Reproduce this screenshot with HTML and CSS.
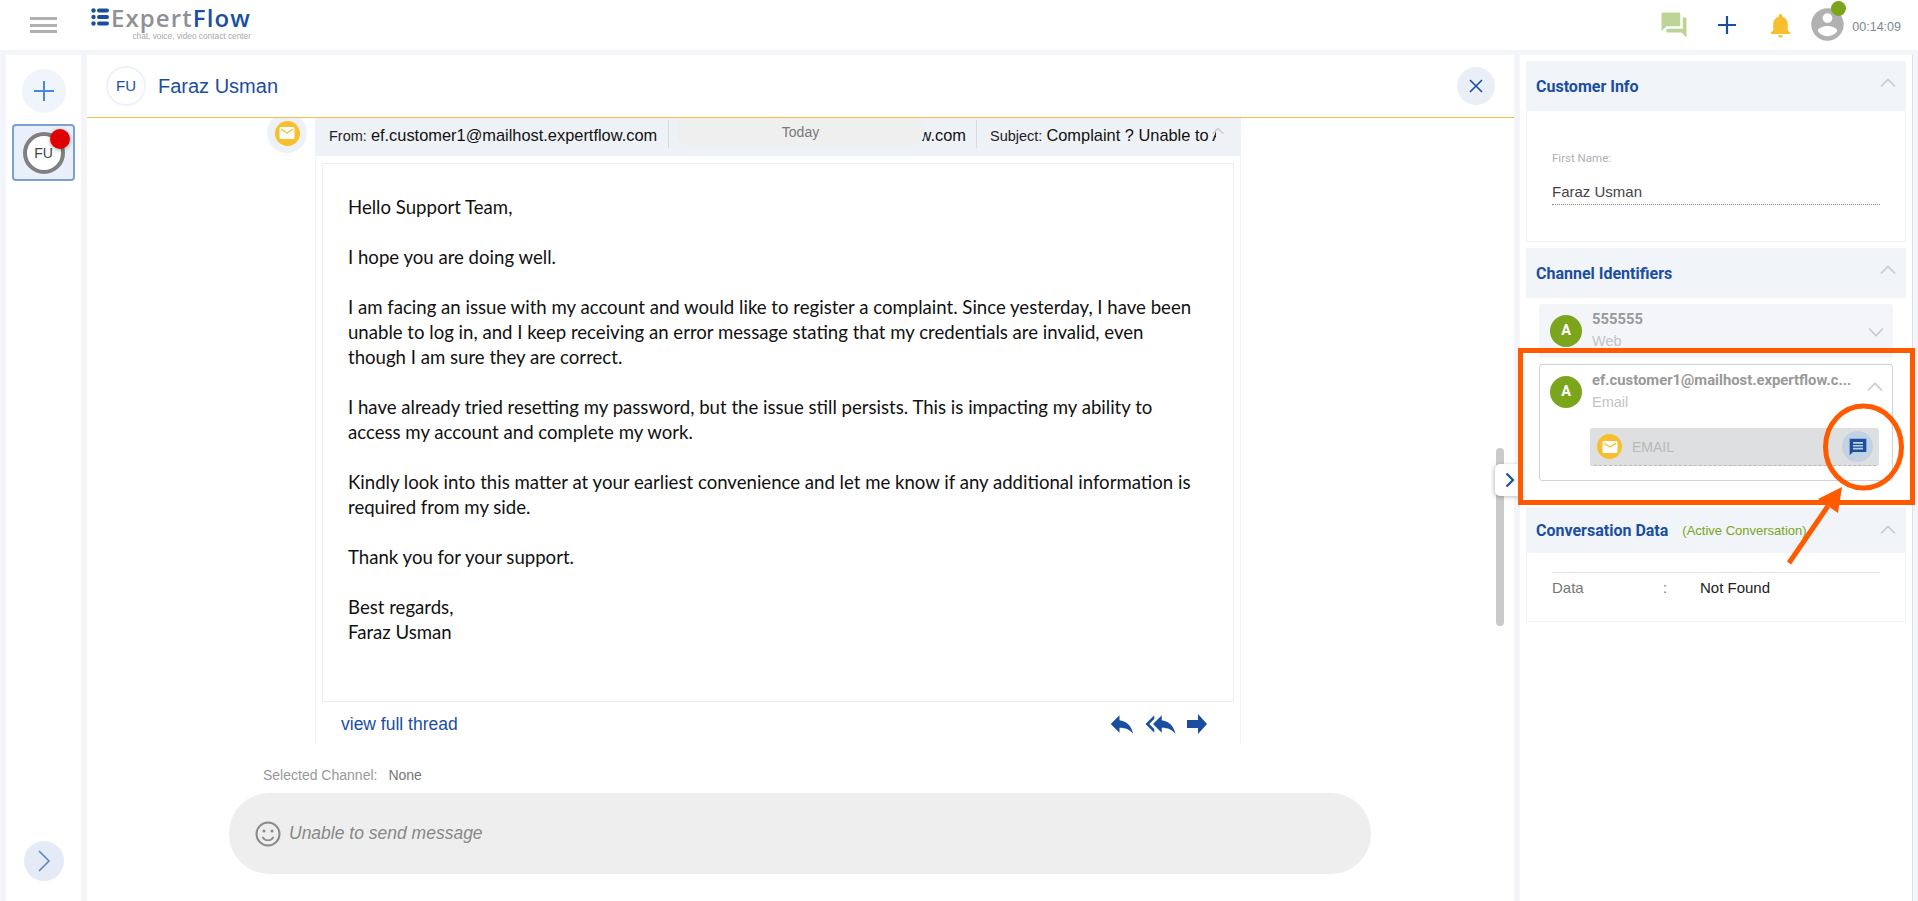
FILE: index.html
```html
<html>
<head>
    <title>ExpertFlow</title>
    <link rel="stylesheet" href="styles.css">
</head>

<body>
<svg class="defs" width="0" height="0">
    <symbol id="mail" viewBox="0 0 24 24"><path d="M20 4H4c-1.1 0-2 .9-2 2v12c0 1.1.9 2 2 2h16c1.1 0 2-.9 2-2V6c0-1.1-.9-2-2-2zm0 4l-8 5-8-5V6l8 5 8-5v2z"/></symbol>
    <symbol id="up" viewBox="0 0 16 10"><path d="M1 8.5L8 1.5l7 7" fill="none" stroke="currentColor" stroke-width="1.6"/></symbol>
</svg>

<div class="topbar">
    <div class="hamburger"><span></span><span></span><span></span></div>
    <div class="logo">
        <svg class="logoDots" width="18" height="18" viewBox="0 0 18 18" fill="#1a4fa0">
            <circle cx="2.5" cy="2.5" r="2.2"/><rect x="6" y="0.5" width="12" height="4" rx="2"/>
            <circle cx="2.5" cy="9" r="2.2"/><rect x="6" y="7" width="12" height="4" rx="2"/>
            <circle cx="2.5" cy="15.5" r="2.2"/><rect x="6" y="13.5" width="12" height="4" rx="2"/>
        </svg>
        <div class="logoText">
            <div class="logoName"><span class="grey">Expert</span><span class="blue">Flow</span></div>
            <div class="logoSub">chat, voice, video contact center</div>
        </div>
    </div>
    <div class="topIcons">
        <svg class="icoChat" width="30" height="30" viewBox="0 0 24 24" fill="#bcd495"><path d="M21 6h-2v9H6v2c0 .55.45 1 1 1h11l4 4V7c0-.55-.45-1-1-1zm-4 6V3c0-.55-.45-1-1-1H3c-.55 0-1 .45-1 1v14l4-4h10c.55 0 1-.45 1-1z"/></svg>
        <svg class="icoPlus" width="18" height="18" viewBox="0 0 18 18"><path d="M9 0v18M0 9h18" stroke="#1a4fa0" stroke-width="2.2"/></svg>
        <svg class="icoBell" width="29" height="29" viewBox="0 0 24 24" fill="#f8bf2c"><path d="M12 22c1.1 0 2-.9 2-2h-4c0 1.1.9 2 2 2zm6-6v-5c0-3.07-1.63-5.64-4.5-6.32V4c0-.83-.67-1.5-1.5-1.5s-1.5.67-1.5 1.5v.68C7.64 5.36 6 7.92 6 11v5l-2 2v1h16v-1l-2-2z"/></svg>
        <div class="userBox">
            <svg width="39" height="39" viewBox="0 0 24 24" fill="#b1b1b1"><path d="M12 2C6.48 2 2 6.48 2 12s4.48 10 10 10 10-4.48 10-10S17.52 2 12 2zm0 3c1.66 0 3 1.34 3 3s-1.34 3-3 3-3-1.34-3-3 1.34-3 3-3zm0 14.2c-2.5 0-4.71-1.28-6-3.22.03-1.99 4-3.08 6-3.08 1.99 0 5.97 1.09 6 3.08-1.29 1.94-3.5 3.22-6 3.22z"/></svg>
            <span class="userDot"></span>
        </div>
        <span class="timer">00:14:09</span>
    </div>
</div>

<div class="page">
    <div class="leftBar">
        <div class="addBtn"><svg width="20" height="20" viewBox="0 0 20 20"><path d="M10 0v20M0 10h20" stroke="#4a86e8" stroke-width="2"/></svg></div>
        <div class="convItem">
            <div class="convAvatar">FU</div>
            <span class="redDot"></span>
        </div>
        <div class="expandBtn"><svg width="14" height="22" viewBox="0 0 14 22"><path d="M2 1l10 10L2 21" fill="none" stroke="#5f86c4" stroke-width="1.6"/></svg></div>
    </div>

    <div class="mainCol">
        <div class="chatHead">
            <div class="headAvatar">FU</div>
            <div class="headName">Faraz Usman</div>
            <div class="closeBtn"><svg width="14" height="14" viewBox="0 0 14 14"><path d="M1 1l12 12M13 1L1 13" stroke="#1a4fa0" stroke-width="1.6"/></svg></div>
        </div>

        <div class="thread">
            <div class="mailHalo"><div class="mailDot"><svg width="18" height="18" fill="#fff"><use href="#mail"/></svg></div></div>
            <div class="mailCard">
                <div class="mailHead">
                    <div class="mailCell cellFrom">From: <b>ef.customer1@mailhost.expertflow.com</b></div>
                    <div class="mailCell cellTo"><b>support@mailhost.expertflow.com</b></div>
                    <div class="mailCell cellSubject">Subject: <b>Complaint ? Unable to Access Account</b></div>
                    <svg class="mailUp" width="12" height="8" color="#c4c4c4"><use href="#up"/></svg>
                    <div class="todayPill">Today</div>
                </div>
                <div class="mailBody">
                    <p>Hello Support Team,</p>
                    <p>I hope you are doing well.</p>
                    <p>I am facing an issue with my account and would like to register a complaint. Since yesterday, I have been unable to log in, and I keep receiving an error message stating that my credentials are invalid, even though I am sure they are correct.</p>
                    <p>I have already tried resetting my password, but the issue still persists. This is impacting my ability to access my account and complete my work.</p>
                    <p>Kindly look into this matter at your earliest convenience and let me know if any additional information is required from my side.</p>
                    <p>Thank you for your support.</p>
                    <p>Best regards,<br>Faraz Usman</p>
                </div>
                <div class="mailFoot">
                    <span class="fullThread">view full thread</span>
                    <div class="mailActions">
                        <svg width="30" height="30" viewBox="0 0 24 24" fill="#1a4fa0"><path d="M10 9V5l-7 7 7 7v-4.1c5 0 8.500 1.600 11 5.100-1-5-4-10-11-11z"/></svg>
                        <svg width="33" height="30" viewBox="0 0 24 24" fill="#1a4fa0"><path d="M7 8V5l-7 7 7 7v-3l-4-4 4-4zm6 1V5l-7 7 7 7v-4.100c5 0 8.500 1.600 11 5.100-1-5-4-10-11-11z"/></svg>
                        <svg class="icoForward" width="20" height="20" viewBox="0 0 20 20" fill="#1a4fa0"><path d="M0 6h11V0l9 10-9 10v-6H0z"/></svg>
                    </div>
                </div>
            </div>
            <div class="scrollThumb"></div>
        </div>
        <div class="collapseTab"><svg width="10" height="16" viewBox="0 0 10 16"><path d="M1.500 1.500L8 8l-6.500 6.500" fill="none" stroke="#1a4fa0" stroke-width="2.200"/></svg></div>

        <div class="composer">
            <div class="selected"><span class="selLabel">Selected Channel:</span><span class="selValue">None</span></div>
            <div class="inputPill">
                <svg width="26" height="26" viewBox="0 0 26 26" fill="none" stroke="#8a8a8a" stroke-width="2"><circle cx="13" cy="13" r="11.500"/><circle cx="9" cy="10" r="1.500" fill="#8a8a8a" stroke="none"/><circle cx="17" cy="10" r="1.500" fill="#8a8a8a" stroke="none"/><path d="M7.500 16c1.200 2.200 3.200 3.300 5.500 3.300s4.300-1.100 5.500-3.300" stroke-width="1.600"/></svg>
                <span class="inputText">Unable to send message</span>
            </div>
        </div>
    </div>

    <div class="rightBar">
        <div class="section">
            <div class="sectionHead"><span class="sectionTitle">Customer Info</span><svg class="sectionUp" width="16" height="10" color="#c9c9c9"><use href="#up"/></svg></div>
            <div class="sectionBody infoBody">
                <div class="fieldLabel">First Name:</div>
                <div class="fieldValue">Faraz Usman</div>
            </div>
        </div>

        <div class="section">
            <div class="sectionHead"><span class="sectionTitle">Channel Identifiers</span><svg class="sectionUp" width="16" height="10" color="#c9c9c9"><use href="#up"/></svg></div>
            <div class="channels">
                <div class="channel channelClosed">
                    <div class="channelTop">
                        <div class="channelAvatar">A</div>
                        <div class="channelText">
                            <div class="channelId">555555</div>
                            <div class="channelType">Web</div>
                        </div>
                        <svg class="channelArrow flip" width="16" height="10" color="#c9c9c9"><use href="#up"/></svg>
                    </div>
                </div>
                <div class="channel channelOpen">
                    <div class="channelTop">
                        <div class="channelAvatar">A</div>
                        <div class="channelText">
                            <div class="channelId">ef.customer1@mailhost.expertflow.c...</div>
                            <div class="channelType">Email</div>
                        </div>
                        <svg class="channelArrow" width="16" height="10" color="#c9c9c9"><use href="#up"/></svg>
                    </div>
                    <div class="channelBtn">
                        <div class="mailDot"><svg width="18" height="18" fill="#fff"><use href="#mail"/></svg></div>
                        <span class="channelBtnText">EMAIL</span>
                        <div class="startChat"><svg width="20" height="20" viewBox="0 0 24 24" fill="#1a4fa0"><path fill-rule="evenodd" d="M2 2h20v16H6l-4 4zM6 6v2h12V6zM6 9.500v2h12v-2zM6 13v2h12v-2z"/></svg></div>
                    </div>
                </div>
            </div>
        </div>

        <div class="section">
            <div class="sectionHead convHead"><span class="sectionTitle">Conversation Data</span><span class="activeConv">(Active Conversation)</span><svg class="sectionUp" width="16" height="10" color="#c9c9c9"><use href="#up"/></svg></div>
            <div class="sectionBody dataBody">
                <div class="dataRow"><span class="dataKey">Data</span><span class="dataColon">:</span><span class="dataVal">Not Found</span></div>
            </div>
        </div>
    </div>
</div>

<svg class="annotation" width="408" height="240" viewBox="1510 340 408 240">
    <rect x="1520.500" y="350.500" width="392" height="152" fill="none" stroke="#ff5a00" stroke-width="5"/>
    <ellipse cx="1863.500" cy="447" rx="38" ry="41" fill="none" stroke="#ff5a00" stroke-width="5"/>
    <path d="M1789 563L1828 506" stroke="#ff5a00" stroke-width="5"/>
    <path d="M1842 487L1818 499L1838 513z" fill="#ff5a00"/>
</svg>
</body>
</html>
```

FILE: styles.css
```css
html, body {
    margin: 0;
    height: 100%;
    overflow: hidden;
}

body {
    position: relative;
    background-color: #f3f5fa;
    font-family: "Liberation Sans", Arial, sans-serif;
}

.defs {
    position: absolute;
}

p {
    margin: 0 0 25px 0;
}

/* top bar */
.topbar {
    height: 50px;
    background-color: #fff;
    display: flex;
    align-items: flex-start;
}

.hamburger {
    margin: 17px 0 0 30px;
    width: 27px;
    height: 16px;
    display: flex;
    flex-direction: column;
    justify-content: space-between;
}

.hamburger span {
    height: 3px;
    background-color: #b0b0b0;
}

.logo {
    margin: 7px 0 0 34px;
    display: flex;
}

.logoDots {
    margin: 1px 2px 0 0;
}

.logoName {
    font-family: "Open Sans", sans-serif;
    font-size: 24px;
    line-height: 22px;
    letter-spacing: 1.100px;
    font-weight: 600;
    height: 24px;
}

.grey {
    color: #8e9195;
}

.blue {
    color: #1a4fa0;
}

.logoSub {
    font-size: 8.300px;
    line-height: 10px;
    color: #a9a9a9;
    text-align: right;
}

.topIcons {
    margin-left: auto;
    display: flex;
    align-items: center;
    height: 50px;
    padding-right: 17px;
}

.icoChat {
    margin: 0 29px 0 0;
}

.icoPlus {
    margin-right: 30px;
}

.icoBell {
    margin-right: 13px;
}

.userBox {
    position: relative;
    width: 39px;
    height: 39px;
    margin-bottom: 2px;
}

.userDot {
    position: absolute;
    left: 23px;
    top: -4px;
    width: 15px;
    height: 15px;
    border-radius: 50%;
    background-color: #7aa51c;
}

.timer {
    font-size: 12.500px;
    color: #7d8794;
    margin: 4px 0 0 5px;
}

/* three columns */
.page {
    height: 851px;
    padding: 5px 5px 0 6px;
    box-sizing: border-box;
    display: flex;
    gap: 6px;
}

.leftBar {
    width: 75px;
    background-color: #fff;
    display: flex;
    flex-direction: column;
    align-items: center;
}

.addBtn {
    width: 44px;
    height: 44px;
    margin-top: 14px;
    border-radius: 50%;
    background-color: #f0f4fb;
    display: flex;
    align-items: center;
    justify-content: center;
}

.convItem {
    position: relative;
    width: 63px;
    height: 57px;
    margin-top: 11px;
    box-sizing: border-box;
    background-color: #e9f0fb;
    border: 2px solid #7f9fd0;
    border-radius: 4px;
    display: flex;
    align-items: center;
    justify-content: center;
}

.convAvatar {
    width: 34px;
    height: 34px;
    border: 4px solid #808080;
    border-radius: 50%;
    background-color: #fff;
    color: #444;
    font-size: 14px;
    text-align: center;
    line-height: 34px;
}

.redDot {
    position: absolute;
    right: 3px;
    top: 3px;
    width: 20px;
    height: 20px;
    border-radius: 50%;
    background-color: #e00000;
    box-shadow: 0 1px 4px rgba(0, 0, 0, 0.35);
}

.expandBtn {
    margin-top: auto;
    margin-bottom: 20px;
    width: 40px;
    height: 40px;
    border-radius: 50%;
    background-color: #e4ebf7;
    display: flex;
    align-items: center;
    justify-content: center;
}

/* middle column */
.mainCol {
    position: relative;
    width: 1427px;
    background-color: #fff;
    display: flex;
    flex-direction: column;
}

.chatHead {
    height: 62px;
    flex-shrink: 0;
    border-bottom: 1px solid #f0bf4c;
    display: flex;
    align-items: center;
    padding: 0 19px;
}

.headAvatar {
    width: 36px;
    height: 36px;
    border: 2px solid #edf2fd;
    border-radius: 50%;
    color: #1a4fa0;
    font-size: 15px;
    line-height: 35px;
    text-align: center;
}

.headName {
    margin-left: 12px;
    font-size: 20px;
    color: #1a4fa0;
}

.closeBtn {
    margin-left: auto;
    width: 38px;
    height: 38px;
    border-radius: 50%;
    background-color: #e9eef7;
    display: flex;
    align-items: center;
    justify-content: center;
}

.thread {
    position: relative;
    height: 626px;
    flex-shrink: 0;
    overflow: hidden;
    display: flex;
    align-items: flex-start;
    padding-left: 180px;
    gap: 8px;
}

.mailHalo {
    width: 40px;
    height: 40px;
    margin-top: -5px;
    flex-shrink: 0;
    border-radius: 50%;
    background-color: #eef1f6;
    display: flex;
    align-items: center;
    justify-content: center;
}

.mailDot {
    width: 25px;
    height: 25px;
    flex-shrink: 0;
    border-radius: 50%;
    background-color: #f8bf2c;
    display: flex;
    align-items: center;
    justify-content: center;
}

.mailCard {
    width: 926px;
    height: 626px;
    box-sizing: border-box;
    border-left: 1px solid #edf2fb;
    border-right: 1px solid #edf2fb;
    display: flex;
    flex-direction: column;
}

.mailHead {
    position: relative;
    height: 38px;
    flex-shrink: 0;
    background-color: #eef1f6;
    display: flex;
    align-items: flex-start;
    padding-top: 2px;
    box-sizing: border-box;
    font-size: 14.500px;
    color: #222;
}

.mailHead b {
    font-weight: normal;
    font-size: 16.400px;
    color: #111;
}

.mailCell {
    height: 28px;
    line-height: 30px;
    white-space: nowrap;
    overflow: hidden;
    box-sizing: border-box;
    border-right: 1px solid #d8dbe0;
}

.cellFrom {
    width: 353px;
    padding-left: 13px;
}

.cellTo {
    width: 308px;
    direction: rtl;
    padding-right: 10px;
}

.cellSubject {
    width: 239px;
    padding-left: 13px;
    border-right: none;
}

.mailUp {
    position: absolute;
    right: 16px;
    top: 9px;
}

.todayPill {
    position: absolute;
    left: 361px;
    top: 0;
    width: 247px;
    height: 27px;
    background-color: #efefef;
    border-radius: 0 0 10px 10px;
    color: #777;
    font-size: 14px;
    line-height: 28px;
    text-align: center;
}

.mailBody {
    margin: 7px 6px 0 6px;
    height: 539px;
    flex-shrink: 0;
    box-sizing: border-box;
    border: 1px solid #eeeeee;
    padding: 31px 37px 0 25px;
    font-family: Lato, sans-serif;
    font-size: 18.600px;
    line-height: 25px;
    color: #111;
}

.mailFoot {
    flex: 1;
    display: flex;
    align-items: center;
    justify-content: space-between;
    padding: 2px 33px 0 25px;
}

.fullThread {
    color: #1a4fa0;
    font-size: 17.500px;
}

.mailActions {
    display: flex;
    align-items: center;
    gap: 7px;
}

.icoForward {
    margin-left: 3px;
}

.scrollThumb {
    position: absolute;
    left: 1409px;
    top: 330px;
    width: 8px;
    height: 178px;
    border-radius: 4px;
    background-color: #cacaca;
}

.collapseTab {
    position: absolute;
    left: 1408px;
    top: 409px;
    width: 25px;
    height: 32px;
    box-sizing: border-box;
    padding-left: 10px;
    background-color: #fff;
    border-radius: 5px 0 0 5px;
    box-shadow: -1px 1px 4px rgba(0, 0, 0, 0.25);
    display: flex;
    align-items: center;
}

.composer {
    padding: 23px 0 0 142px;
}

.selected {
    font-size: 14px;
    line-height: 16px;
    margin-left: 34px;
    height: 26px;
}

.selLabel {
    color: #999;
}

.selValue {
    color: #777;
    margin-left: 11px;
}

.inputPill {
    width: 1142px;
    height: 81px;
    box-sizing: border-box;
    padding-left: 26px;
    background-color: #eeeeee;
    border-radius: 40px;
    display: flex;
    align-items: center;
    gap: 8px;
}

.inputText {
    font-size: 17.500px;
    font-style: italic;
    color: #888;
}

/* right column */
.rightBar {
    flex: 1;
    background-color: #fff;
    padding: 6px 6px 0 6px;
    border-right: 1px solid #dde0e6;
    box-sizing: border-box;
}

.section {
    margin-bottom: 6px;
}

.sectionHead {
    position: relative;
    height: 50px;
    background-color: #f1f4f8;
    display: flex;
    align-items: center;
    padding-left: 10px;
}

.convHead {
    height: 45px;
}

.sectionTitle {
    font-family: Roboto, sans-serif;
    font-weight: 700;
    font-size: 16px;
    color: #1a4fa0;
}

.sectionUp {
    position: absolute;
    right: 10px;
    top: 17px;
}

.sectionBody {
    box-sizing: border-box;
    border: 1px solid #f1f3f6;
    border-top: none;
}

.infoBody {
    height: 131px;
    padding: 41px 25px 0 25px;
}

.fieldLabel {
    font-family: Roboto, sans-serif;
    font-size: 11.500px;
    line-height: 12px;
    color: #aeb1b5;
}

.fieldValue {
    margin-top: 16px;
    font-size: 15px;
    line-height: 24px;
    height: 24px;
    color: #444;
    border-bottom: 1px dotted #888;
}

.channels {
    padding: 6px 13px 21px 13px;
    margin-bottom: 6px;
}

.channel {
    box-sizing: border-box;
    width: 354px;
    border-radius: 3px;
}

.channelClosed {
    height: 54px;
    background-color: #f3f5f9;
    margin-bottom: 6px;
    overflow: hidden;
}

.channelOpen {
    height: 117px;
    border: 1px solid #cfd2d6;
}

.channelTop {
    position: relative;
    display: flex;
    padding: 10px 0 0 11px;
    gap: 10px;
}

.channelOpen .channelTop {
    padding-left: 10px;
}

.channelAvatar {
    width: 32px;
    height: 32px;
    margin-top: 1px;
    border-radius: 50%;
    background-color: #7aa51c;
    color: #fff;
    font-family: Roboto, sans-serif;
    font-weight: 700;
    font-size: 14.500px;
    line-height: 32px;
    text-align: center;
}

.channelText {
    margin-top: -6px;
}

.channelId {
    font-family: Roboto, sans-serif;
    font-weight: 700;
    font-size: 14.800px;
    line-height: 22px;
    color: #999;
    white-space: nowrap;
}

.channelType {
    font-size: 14.500px;
    line-height: 22px;
    color: #c4c4c4;
}

.channelArrow {
    position: absolute;
    right: 9px;
    top: 23px;
}

.channelOpen .channelArrow {
    top: 17px;
}

.flip {
    transform: scaleY(-1);
}

.channelBtn {
    margin: 15px 0 0 50px;
    width: 289px;
    height: 38px;
    box-sizing: border-box;
    padding: 0 6px 0 7px;
    background-color: #dedfe1;
    border-radius: 3px;
    border-bottom: 1px dashed #bbb;
    display: flex;
    align-items: center;
}

.channelBtnText {
    margin-left: 10px;
    font-size: 14px;
    color: #b8b8b8;
}

.startChat {
    margin-left: auto;
    width: 31px;
    height: 31px;
    border-radius: 50%;
    background-color: #c3d1e4;
    display: flex;
    align-items: center;
    justify-content: center;
}

.activeConv {
    margin-left: 14px;
    font-size: 13px;
    color: #7aa51c;
}

.dataBody {
    height: 69px;
    padding: 19px 25px 0 25px;
}

.dataRow {
    border-top: 1px solid #e0e5ec;
    padding-top: 7px;
    display: flex;
    font-size: 15px;
    line-height: 16px;
}

.dataKey {
    width: 111px;
    color: #777;
}

.dataColon {
    width: 37px;
    color: #777;
}

.dataVal {
    color: #222;
}

/* orange callout drawn over the page */
.annotation {
    position: absolute;
    left: 1510px;
    top: 340px;
}
```
